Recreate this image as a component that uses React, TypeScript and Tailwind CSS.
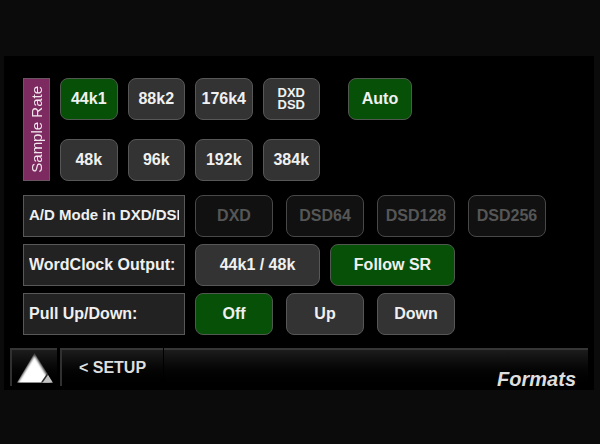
import React, { useState } from "react";
import clsx from "clsx";

interface KeyButtonProps {
  children: React.ReactNode;
  active?: boolean;
  disabled?: boolean;
  className?: string;
  onClick?: () => void;
}

const KeyButton: React.FC<KeyButtonProps> = ({
  children,
  active,
  disabled,
  className,
  onClick,
}) => (
  <button
    type="button"
    disabled={disabled}
    aria-pressed={!!active}
    onClick={onClick}
    className={clsx(
      "flex h-[42px] items-center justify-center rounded-lg border font-bold whitespace-nowrap",
      disabled && "border-[#484848] bg-[#111111] text-[#565656]",
      !disabled && active && "border-[#505850] bg-[#075007] text-[#f0f0f0]",
      !disabled && !active && "border-[#575757] bg-[#333333] text-[#f0f0f0]",
      className,
    )}
  >
    {children}
  </button>
);

interface SettingRowProps {
  label: string;
  compact?: boolean;
  children: React.ReactNode;
}

const SettingRow: React.FC<SettingRowProps> = ({ label, compact, children }) => (
  <div role="group" aria-label={label} className="flex gap-2.5">
    <div className="flex h-[42px] w-[162px] items-center border border-[#585858] bg-[#222222] px-[5px]">
      <span
        className={clsx(
          "w-full overflow-hidden font-bold whitespace-nowrap text-[#f0f0f0]",
          compact && "pb-0.5 text-[15px]",
        )}
      >
        {label}
      </span>
    </div>
    {children}
  </div>
);

const sampleRates = ["44k1", "88k2", "176k4", "DXD DSD", "48k", "96k", "192k", "384k"];
const adModes = ["DXD", "DSD64", "DSD128", "DSD256"];
const clockOutputs = ["44k1 / 48k", "Follow SR"];
const pullModes = ["Off", "Up", "Down"];

export default function App() {
  const [rate, setRate] = useState("44k1");
  const [auto, setAuto] = useState(true);
  const [clock, setClock] = useState("Follow SR");
  const [pull, setPull] = useState("Off");

  return (
    <div className="min-h-screen bg-[#0b0b0b] pt-14 pr-1.5 pl-1 font-['Liberation_Sans',Arial,sans-serif] text-base leading-5">
      <main className="bg-black pt-[22px]">
        <div className="flex flex-col gap-[7px] pl-[19px]">
          {/* Sample rate */}
          <section aria-label="Sample Rate" className="mb-[7px] flex items-start gap-2.5">
            <div className="flex w-[27px] items-center justify-center self-stretch border border-[#6b5563] bg-[#7d2a60] text-[15px] text-[#f0e6ec]">
              <span className="rotate-180 whitespace-nowrap [writing-mode:vertical-rl]">
                Sample Rate
              </span>
            </div>
            <div className="grid w-[260px] grid-cols-4 gap-x-2.5 gap-y-[19px]">
              {sampleRates.map((item) => (
                <KeyButton
                  key={item}
                  active={rate === item}
                  onClick={() => setRate(item)}
                >
                  {item === "DXD DSD" ? (
                    <span className="text-[13px] leading-3">
                      DXD
                      <br />
                      DSD
                    </span>
                  ) : (
                    item
                  )}
                </KeyButton>
              ))}
            </div>
            <KeyButton
              active={auto}
              onClick={() => setAuto(!auto)}
              className="ml-[18px] w-16"
            >
              Auto
            </KeyButton>
          </section>

          <SettingRow label="A/D Mode in DXD/DSD:" compact>
            <div className="grid w-[351px] grid-cols-4 gap-[13px]">
              {adModes.map((item) => (
                <KeyButton key={item} disabled>
                  {item}
                </KeyButton>
              ))}
            </div>
          </SettingRow>

          <SettingRow label="WordClock Output:">
            <div className="grid w-[260px] grid-cols-2 gap-2.5">
              {clockOutputs.map((item) => (
                <KeyButton
                  key={item}
                  active={clock === item}
                  onClick={() => setClock(item)}
                >
                  {item}
                </KeyButton>
              ))}
            </div>
          </SettingRow>

          <SettingRow label="Pull Up/Down:">
            <div className="grid w-[260px] grid-cols-3 gap-[13px]">
              {pullModes.map((item) => (
                <KeyButton
                  key={item}
                  active={pull === item}
                  onClick={() => setPull(item)}
                >
                  {item}
                </KeyButton>
              ))}
            </div>
          </SettingRow>
        </div>

        {/* Bottom bar */}
        <nav className="mt-[13px] flex h-[42px] px-1.5 text-[#dedede]">
          <button
            type="button"
            aria-label="Home"
            className="mr-[3px] flex w-[47px] items-start border-t-2 border-[#363636] bg-linear-to-b from-[#1c1c1c] to-black"
          >
            <span className="h-9 w-0.5 bg-[#303030]" />
            <svg className="mx-auto mt-[3px]" width="36" height="30" viewBox="0 0 36 30" aria-hidden="true">
              <defs>
                <clipPath id="peak">
                  <path d="M17.500 0 L36 29.500 H0 Z" />
                </clipPath>
                <filter id="soften" x="-30%" y="-30%" width="160%" height="160%">
                  <feGaussianBlur stdDeviation="1.300" />
                </filter>
              </defs>
              <g clipPath="url(#peak)">
                <rect width="36" height="30" fill="#3a3a3a" />
                <path d="M17.500 2.500 L38 36 H-3 Z" fill="#ffffff" filter="url(#soften)" />
                <path d="M30.500 21 L36 30 H25 Z" fill="#c4c4c4" />
                <path d="M24.500 30 L31 20.500" stroke="#303030" strokeWidth="1.500" />
              </g>
            </svg>
          </button>
          <button
            type="button"
            className="flex w-[103px] items-start border-t-2 border-[#363636] bg-linear-to-b from-[#1c1c1c] to-black font-bold whitespace-nowrap"
          >
            <span className="h-9 w-0.5 bg-[#303030]" />
            <span className="flex h-9 flex-1 items-center justify-center">&lt; SETUP</span>
          </button>
          <div className="ml-px flex flex-1 items-end justify-end border-t-2 border-[#363636] bg-linear-to-b from-[#1c1c1c] to-black pr-3">
            <h1 className="text-[20px] leading-[22px] font-bold italic">Formats</h1>
          </div>
        </nav>
      </main>
    </div>
  );
}
